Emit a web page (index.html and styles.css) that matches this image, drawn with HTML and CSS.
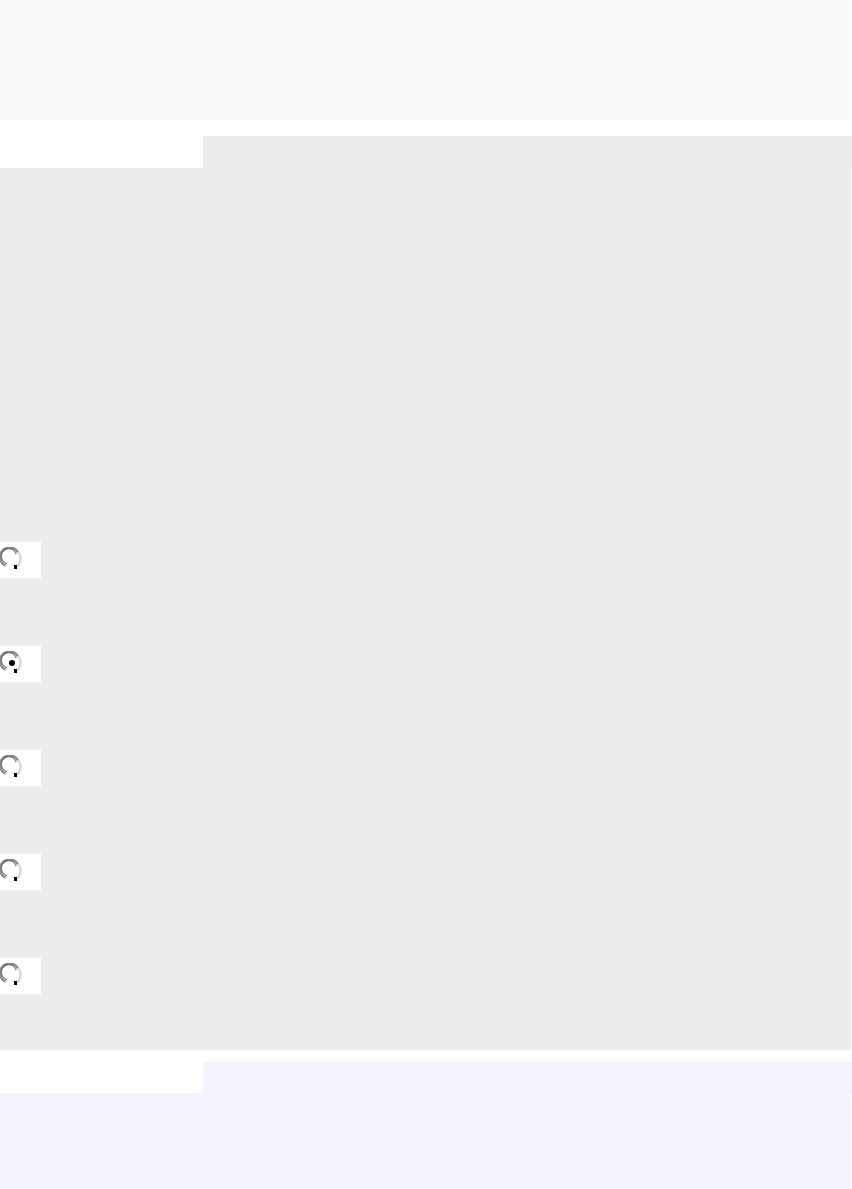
FILE: index.html
```html
<!DOCTYPE html>
<html>
<head>
<meta charset="utf-8">
<link rel="stylesheet" href="styles.css">
</head>
<body>
<div class="top"></div>
<section class="sec gray">
  <div class="tabrow"><div class="tabgap"></div><div class="tab"></div></div>
  <div class="panel">
    <div class="radios">
      <div class="rbox"><svg class="radio" width="24" height="24" viewBox="0 0 24 24"><circle cx="12" cy="12" r="9" fill="#fff"/><path d="M18 5.5 A9.5 9.5 0 1 0 5.5 18.5" fill="none" stroke="#8c8c8c" stroke-width="2.5"/><path d="M16 7 A7.5 7.5 0 1 0 7 16.5" fill="none" stroke="#555" stroke-width="1"/><path d="M18.5 6 A9.5 9.5 0 0 1 17 19.5" fill="none" stroke="#d8d8d8" stroke-width="2.5"/><rect x="14" y="18" width="3" height="4" fill="#000"/></svg></div>
      <div class="rbox"><svg class="radio" width="24" height="24" viewBox="0 0 24 24"><circle cx="12" cy="12" r="9" fill="#fff"/><path d="M18 5.5 A9.5 9.5 0 1 0 5.5 18.5" fill="none" stroke="#8c8c8c" stroke-width="2.5"/><path d="M16 7 A7.5 7.5 0 1 0 7 16.5" fill="none" stroke="#555" stroke-width="1"/><path d="M18.5 6 A9.5 9.5 0 0 1 17 19.5" fill="none" stroke="#d8d8d8" stroke-width="2.5"/><rect x="14" y="18" width="3" height="4" fill="#000"/><circle cx="12" cy="12" r="3" fill="#000"/></svg></div>
      <div class="rbox"><svg class="radio" width="24" height="24" viewBox="0 0 24 24"><circle cx="12" cy="12" r="9" fill="#fff"/><path d="M18 5.5 A9.5 9.5 0 1 0 5.5 18.5" fill="none" stroke="#8c8c8c" stroke-width="2.5"/><path d="M16 7 A7.5 7.5 0 1 0 7 16.5" fill="none" stroke="#555" stroke-width="1"/><path d="M18.5 6 A9.5 9.5 0 0 1 17 19.5" fill="none" stroke="#d8d8d8" stroke-width="2.5"/><rect x="14" y="18" width="3" height="4" fill="#000"/></svg></div>
      <div class="rbox"><svg class="radio" width="24" height="24" viewBox="0 0 24 24"><circle cx="12" cy="12" r="9" fill="#fff"/><path d="M18 5.5 A9.5 9.5 0 1 0 5.5 18.5" fill="none" stroke="#8c8c8c" stroke-width="2.5"/><path d="M16 7 A7.5 7.5 0 1 0 7 16.5" fill="none" stroke="#555" stroke-width="1"/><path d="M18.5 6 A9.5 9.5 0 0 1 17 19.5" fill="none" stroke="#d8d8d8" stroke-width="2.5"/><rect x="14" y="18" width="3" height="4" fill="#000"/></svg></div>
      <div class="rbox"><svg class="radio" width="24" height="24" viewBox="0 0 24 24"><circle cx="12" cy="12" r="9" fill="#fff"/><path d="M18 5.5 A9.5 9.5 0 1 0 5.5 18.5" fill="none" stroke="#8c8c8c" stroke-width="2.5"/><path d="M16 7 A7.5 7.5 0 1 0 7 16.5" fill="none" stroke="#555" stroke-width="1"/><path d="M18.5 6 A9.5 9.5 0 0 1 17 19.5" fill="none" stroke="#d8d8d8" stroke-width="2.5"/><rect x="14" y="18" width="3" height="4" fill="#000"/></svg></div>
    </div>
  </div>
</section>
<section class="sec blue">
  <div class="tabrow"><div class="tabgap"></div><div class="tab"></div></div>
  <div class="panel panel-last"></div>
</section>
</body>
</html>
```
FILE: styles.css
```css
html, body {
  margin: 0;
  padding: 0;
  background: #ffffff;
  font-family: "Liberation Sans", Arial, sans-serif;
}
body {
  width: 852px;
  height: 1189px;
  overflow: hidden;
}
.top {
  width: 851px;
  height: 120px;
  background: #fafafa;
  margin-bottom: 16px;
}
.sec {
  display: flex;
  flex-direction: column;
}
.tabrow {
  display: flex;
  height: 32px;
}
.tabgap {
  width: 203px;
  background: #fff;
}
.tab {
  flex: 1;
}
.panel {
  width: 851px;
}
.gray .tab, .gray .panel { background: #ededed; }
.blue .tab, .blue .panel { background: #f3f3fd; }
.gray .panel {
  height: 882px;
  margin-bottom: 12px;
}
.blue .tabrow { height: 31px; }
.panel-last {
  height: 96px;
}
.radios {
  display: flex;
  flex-direction: column;
  gap: 68px;
  padding-top: 374px;
}
.rbox {
  width: 41px;
  height: 36px;
  background: #fff;
  display: flex;
  align-items: flex-start;
}
.radio {
  display: block;
  margin-top: 5px;
}
```
